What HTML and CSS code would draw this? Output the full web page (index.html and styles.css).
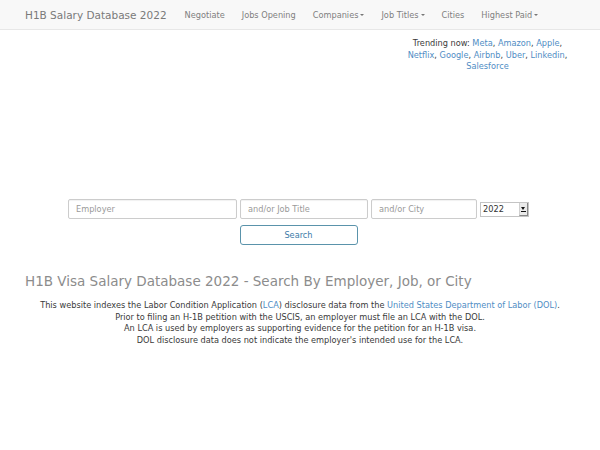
FILE: index.html
```html
<!DOCTYPE html>
<html>
<head>
<meta charset="utf-8">
<title>H1B Salary Database 2022</title>
<link rel="stylesheet" href="styles.css">
</head>
<body>
<nav class="navbar">
  <a class="brand" href="#">H1B Salary Database 2022</a>
  <ul class="nav">
    <li><a href="#">Negotiate</a></li>
    <li><a href="#">Jobs Opening</a></li>
    <li><a href="#">Companies<span class="caret"></span></a></li>
    <li><a href="#">Job Titles<span class="caret"></span></a></li>
    <li><a href="#">Cities</a></li>
    <li><a href="#">Highest Paid<span class="caret"></span></a></li>
  </ul>
</nav>
<div class="trend-row">
  <div class="trending">Trending now: <a href="#">Meta</a>, <a href="#">Amazon</a>, <a href="#">Apple</a>, <a href="#">Netflix</a>, <a href="#">Google</a>, <a href="#">Airbnb</a>, <a href="#">Uber</a>, <a href="#">Linkedin</a>, <a href="#">Salesforce</a></div>
</div>
<form class="search">
  <div class="fields">
    <input class="field employer" type="text" placeholder="Employer">
    <input class="field job" type="text" placeholder="and/or Job Title">
    <input class="field city" type="text" placeholder="and/or City">
    <span class="select-wrap"><select class="year"><option>2022</option></select><span class="arrow"></span></span>
  </div>
  <button class="btn" type="button">Search</button>
</form>
<div class="content">
  <h1 class="title">H1B Visa Salary Database 2022 - Search By Employer, Job, or City</h1>
  <p class="desc">This website indexes the Labor Condition Application (<a href="#">LCA</a>) disclosure data from the <a href="#">United States Department of Labor (DOL)</a>.<br>
  Prior to filing an H-1B petition with the USCIS, an employer must file an LCA with the DOL.<br>
  An LCA is used by employers as supporting evidence for the petition for an H-1B visa.<br>
  DOL disclosure data does not indicate the employer's intended use for the LCA.</p>
</div>
</body>
</html>
```
FILE: styles.css
```css
html, body {
  margin: 0;
  padding: 0;
  background: #fff;
}
body {
  font-family: "DejaVu Sans", "Noto Sans", sans-serif;
  font-size: 8.2px;
  line-height: 12px;
  color: #3a3a3a;
}
a {
  color: #4f8dc4;
  text-decoration: none;
}
.navbar {
  display: flex;
  align-items: center;
  height: 29px;
  padding-left: 25px;
  background: #f8f8f8;
  border-bottom: 1px solid #e7e7e7;
  gap: 18px;
}
.brand {
  font-size: 10.5px;
  color: #7a7a7a;
}
.nav {
  display: flex;
  gap: 17px;
  list-style: none;
  margin: 0;
  padding: 0;
}
.nav a {
  color: #7f7f7f;
}
.caret {
  display: inline-block;
  width: 0;
  height: 0;
  margin-left: 2px;
  vertical-align: middle;
  border-top: 2.5px solid #777;
  border-left: 2.5px solid transparent;
  border-right: 2.5px solid transparent;
}
.trend-row {
  display: flex;
  justify-content: flex-end;
  padding: 8px 25px 0 0;
  height: 161px;
}
.trending {
  width: 175px;
  text-align: center;
  line-height: 11.7px;
  align-self: flex-start;
}
.search {
  display: flex;
  flex-direction: column;
  align-items: center;
  gap: 6px;
  padding-right: 3px;
}
.fields {
  display: flex;
  align-items: center;
  gap: 3px;
}
.field {
  box-sizing: border-box;
  height: 20px;
  padding: 0 7px;
  border: 1px solid #ccc;
  border-radius: 2px;
  font-family: inherit;
  font-size: 8.2px;
  color: #555;
  box-shadow: inset 0 1px 1px rgba(0,0,0,0.06);
}
.field::placeholder {
  color: #9a9a9a;
}
.employer { width: 169px; }
.job { width: 128px; }
.city { width: 106px; }
.select-wrap {
  position: relative;
  display: inline-block;
  width: 49px;
  height: 15px;
}
.year {
  -webkit-appearance: none;
  appearance: none;
  box-sizing: border-box;
  width: 49px;
  height: 15px;
  margin: 0;
  padding: 0 0 0 2px;
  border: 1px solid #c4c4c4;
  border-radius: 0;
  background: #fff;
  font-family: inherit;
  font-size: 8.2px;
  color: #333;
}
.arrow {
  position: absolute;
  right: 1px;
  top: 1px;
  width: 9px;
  height: 13px;
  box-sizing: border-box;
  background: #eaeaea;
  border-left: 1px solid #d0d0d0;
  border-right: 1px solid #888;
  border-bottom: 1px solid #888;
}
.arrow::before {
  content: "";
  position: absolute;
  left: 1px;
  top: 4px;
  border-top: 3px solid #111;
  border-left: 2.5px solid transparent;
  border-right: 2.5px solid transparent;
}
.arrow::after {
  content: "";
  position: absolute;
  left: 1px;
  top: 8px;
  width: 5px;
  height: 1px;
  background: #111;
}
.btn {
  box-sizing: border-box;
  width: 118px;
  height: 20px;
  background: #fff;
  border: 1px solid #5a93ab;
  border-radius: 3px;
  color: #3d7ba8;
  font-family: inherit;
  font-size: 8.2px;
  padding: 0;
}
.content {
  padding: 26px 25px 0;
}
.title {
  margin: 0 0 9px;
  font-size: 13.5px;
  line-height: 20px;
  font-weight: normal;
  color: #8c8c8c;
}
.desc {
  margin: 0;
  text-align: center;
  line-height: 11.7px;
}
```
